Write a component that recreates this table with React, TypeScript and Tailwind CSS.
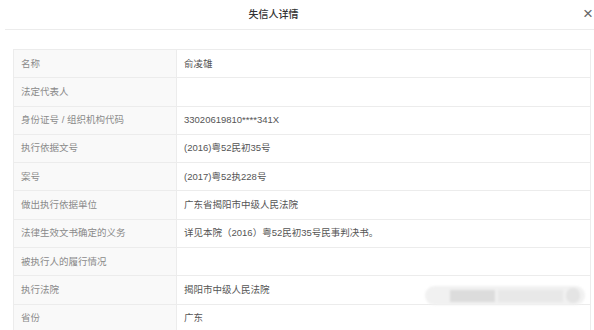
const rows: [string, string][] = [
  ['名称', '俞凌雄'],
  ['法定代表人', ''],
  ['身份证号 / 组织机构代码', '33020619810****341X'],
  ['执行依据文号', '(2016)粤52民初35号'],
  ['案号', '(2017)粤52执228号'],
  ['做出执行依据单位', '广东省揭阳市中级人民法院'],
  ['法律生效文书确定的义务', '详见本院（2016）粤52民初35号民事判决书。'],
  ['被执行人的履行情况', ''],
  ['执行法院', '揭阳市中级人民法院'],
  ['省份', '广东'],
]

export default function App() {
  return (
    <div
      className="relative h-[330px] w-[594px] overflow-hidden bg-white"
      style={{ fontFamily: '"Liberation Sans", "Noto Sans CJK SC", sans-serif' }}
    >
      <div className="relative ml-[5px] flex h-[30px] items-center justify-center border-b border-[#ececec] pr-[52px]">
        <span className="text-[10px] font-medium text-[#333]">失信人详情</span>
        <span className="absolute right-[1px] top-[5px] text-[17px] leading-none text-[#666]">×</span>
      </div>
      <div className="ml-[13px] mr-[3px] mt-[19px] border-l border-r border-t border-[#ececec]">
        {rows.map(([k, v]) => (
          <div key={k} className="flex h-[28.3px] border-b border-[#ececec] text-[9.5px]">
            <div className="flex w-[163px] items-center border-r border-[#ececec] bg-[#f9f9f9] pl-[7px] text-[#8a8a8a]">
              {k}
            </div>
            <div className="flex flex-1 items-center pl-[7px] text-[#555]">{v}</div>
          </div>
        ))}
      </div>
      <div className="absolute left-[425px] top-[286px] flex h-[19px] w-[160px] items-center rounded-full bg-[#f1f1f1] blur-[1px]">
        <div className="ml-[25px] h-[12px] w-[45px] bg-[#dcdcdc]" />
        <div className="ml-[3px] h-[12px] w-[65px] bg-[#e8e8e8]" />
        <div className="ml-[3px] h-[15px] w-[14px] rounded-full bg-[#e4e4e4]" />
      </div>
    </div>
  )
}
